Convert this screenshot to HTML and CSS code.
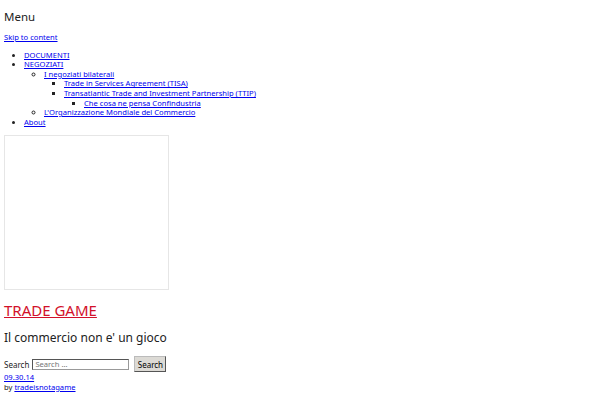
FILE: index.html
```html
<!DOCTYPE html>
<html lang="it">
<head>
  <meta charset="UTF-8" />
  <title>Trade Game</title>
<link rel="stylesheet" href="styles.css">
</head>
<body>
  <header class="site-header">
    <h1 class="menu-toggle">Menu</h1>
    <a class="skip-link" href="#content">Skip to content</a>
    <ul class="menu">
      <li><a href="#">DOCUMENTI</a></li>
      <li><a href="#">NEGOZIATI</a>
        <ul>
          <li><a href="#">I negoziati bilaterali</a>
            <ul>
              <li><a href="#">Trade in Services Agreement (TISA)</a></li>
              <li><a href="#">Transatlantic Trade and Investment Partnership (TTIP)</a>
                <ul>
                  <li><a href="#">Che cosa ne pensa Confindustria</a></li>
                </ul>
              </li>
            </ul>
          </li>
          <li><a href="#">L'Organizzazione Mondiale del Commercio</a></li>
        </ul>
      </li>
      <li><a href="#">About</a></li>
    </ul>
    <div class="header-image"></div>
    <h1 class="site-title"><a href="#">TRADE GAME</a></h1>
    <h2 class="site-description">Il commercio non e' un gioco</h2>
    <form class="search-form">
      <label>Search <input type="search" placeholder="Search …"></label>
      <button type="submit">Search</button>
    </form>
  </header>
  <div id="content" class="entry-meta">
    <a href="#">09.30.14</a><br>
    by <a href="#">tradeisnotagame</a>
  </div>
</body>
</html>
```
FILE: styles.css
```css
body {
  margin: 0;
  padding: 0 4px;
  font-family: "Noto Sans", sans-serif;
  font-size: 7.6px;
  line-height: 9.6px;
  color: #222;
  background: #fff;
}
a {
  color: #00e;
}
.menu-toggle {
  font-size: 11.5px;
  line-height: 14px;
  font-weight: normal;
  margin: 10px 0 9px;
}
.skip-link {
  display: block;
}
.menu {
  margin: 8px 0;
  padding-left: 20px;
}
.menu ul {
  margin: 0;
  padding-left: 20px;
}
.header-image {
  width: 163px;
  height: 153px;
  border: 1px solid #e6e6e6;
  margin-top: 5px;
}
.site-title {
  font-size: 15px;
  line-height: 18px;
  font-weight: normal;
  margin: 11px 0 0;
}
.site-title a {
  color: #d2102a;
}
.site-description {
  font-size: 12px;
  line-height: 14px;
  font-weight: normal;
  margin: 12px 0 0;
}
.search-form {
  margin-top: 11px;
  display: flex;
  align-items: center;
  gap: 5px;
}
.search-form label {
  font-size: 8px;
}
.search-form input {
  font: inherit;
  font-size: 7.6px;
  width: 97px;
  height: 11px;
  padding: 0 2px;
  margin-left: 1px;
  border: 1px solid #999;
  border-top-color: #555;
  border-left-color: #555;
}
.search-form button {
  font: inherit;
  font-size: 8px;
  width: 32px;
  height: 16px;
  padding: 0;
  background: #dcdad5;
  border: 1px solid #bbb;
  border-right-color: #555;
  border-bottom-color: #555;
}
.entry-meta {
  margin-top: 1px;
}
```
